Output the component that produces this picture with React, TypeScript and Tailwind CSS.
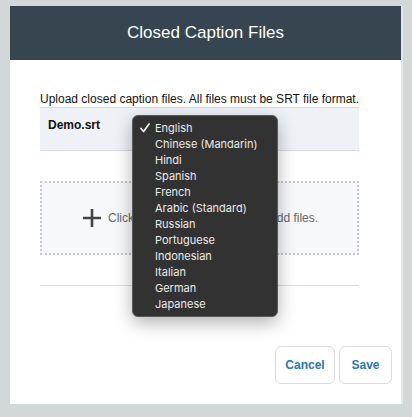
import React from 'react'

const languages = [
  'English',
  'Chinese (Mandarin)',
  'Hindi',
  'Spanish',
  'French',
  'Arabic (Standard)',
  'Russian',
  'Portuguese',
  'Indonesian',
  'Italian',
  'German',
  'Japanese',
]

function LanguageMenu() {
  return (
    <div className="absolute left-[92px] top-[7px] z-10 w-[146px] rounded-[6px] border border-[#5a5a5a] bg-[#323232] py-[4px] shadow-[0_6px_18px_rgba(0,0,0,0.3)] font-['Inter',sans-serif] text-[11px] text-[#ececec]">
      {languages.map((lang, i) => (
        <div key={lang} className="flex h-[16px] items-center">
          <span className="flex w-[22px] justify-center pl-[2px]">
            {i === 0 && (
              <svg width="10" height="10" viewBox="0 0 10 10">
                <path d="M1 5.5l2.6 3L9 1" fill="none" stroke="#f2f2f2" strokeWidth="1.7" strokeLinecap="round" strokeLinejoin="round" />
              </svg>
            )}
          </span>
          <span>{lang}</span>
        </div>
      ))}
    </div>
  )
}

export default function App() {
  return (
    <div className="h-[417px] w-[412px] bg-[#d2d7d7] pt-[6px] pl-[10px] font-['Liberation_Sans',Arial,sans-serif]">
      <div className="h-[398px] w-[391px] bg-white shadow-[2px_0_0_#e4e7e7]">
        <div className="flex h-[54px] items-center justify-center bg-[#36454f] text-[17px] text-white">
          Closed Caption Files
        </div>
        <div className="pl-[30px] pr-[42px] pt-[32px]">
          <p className="whitespace-nowrap text-[12px] leading-[14px] text-[#111]">
            Upload closed caption files. All files must be SRT file format.
          </p>
          <div className="relative mt-[1px] h-[44px] border-y border-[#d6dae0] bg-[#eef1f6] px-[8px] pt-[4px]">
            <span className="text-[12px] font-bold text-[#111]">Demo.srt</span>
            <LanguageMenu />
          </div>
          <div className="mt-[30px] flex h-[74px] items-center border-2 border-dotted border-[#c8c8c8] bg-[#f7f8fb] pl-[40px] text-[12px] text-[#666]">
            <svg width="20" height="20" viewBox="0 0 20 20" className="mr-[6px]">
              <path d="M10 1v18M1 10h18" stroke="#444" strokeWidth="2.6" />
            </svg>
            Click here or drag and drop to add files.
          </div>
          <div className="mt-[30px] border-t border-[#dcdcdc]" />
        </div>
        <div className="mt-[60px] flex justify-end gap-[4px] pr-[9px]">
          <button className="h-[38px] w-[60px] rounded-[6px] border border-[#dcdcdc] text-[12px] font-bold text-[#2a78b0]">
            Cancel
          </button>
          <button className="h-[38px] w-[53px] rounded-[6px] border border-[#dcdcdc] text-[12px] font-bold text-[#2a78b0]">
            Save
          </button>
        </div>
      </div>
    </div>
  )
}
